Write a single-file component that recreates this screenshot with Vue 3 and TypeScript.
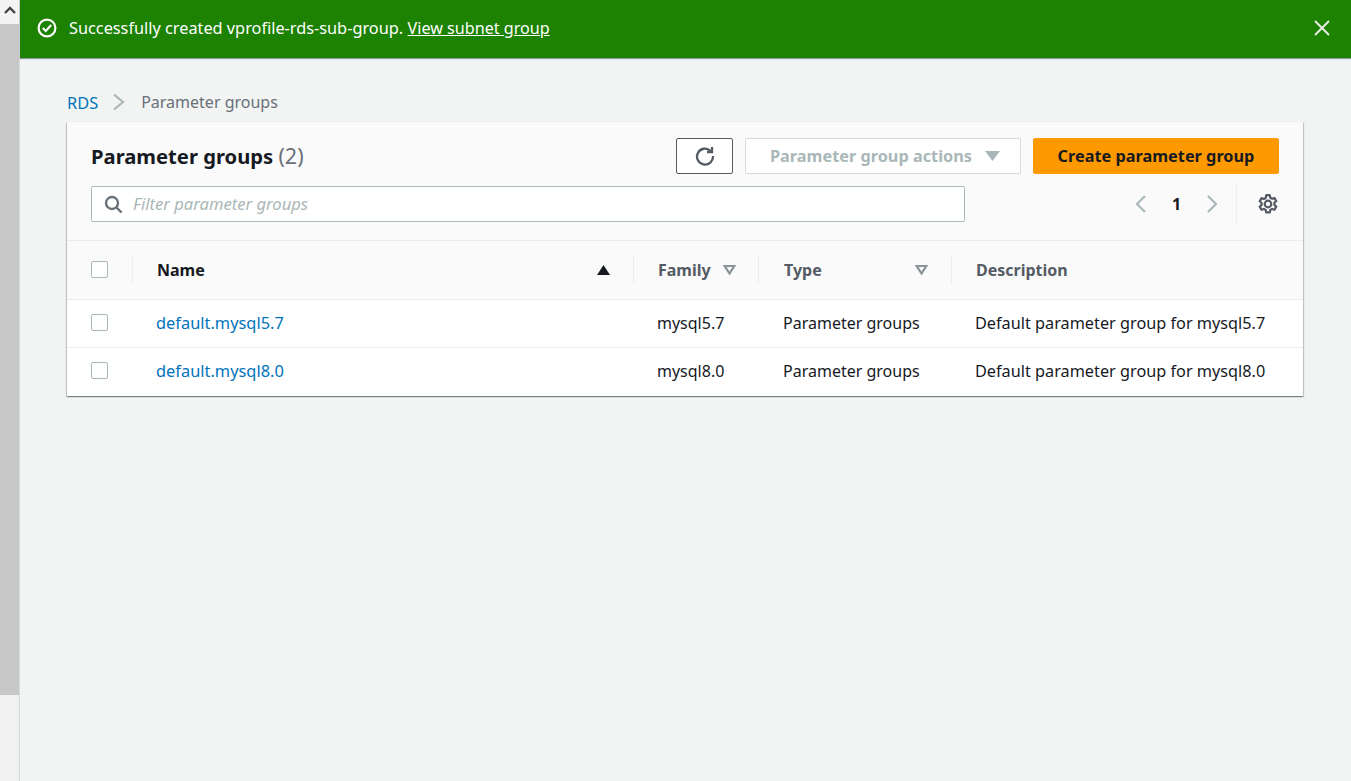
<script setup lang="ts">
interface ParamGroup {
  name: string;
  family: string;
  type: string;
  description: string;
}

const groups: ParamGroup[] = [
  { name: 'default.mysql5.7', family: 'mysql5.7', type: 'Parameter groups', description: 'Default parameter group for mysql5.7' },
  { name: 'default.mysql8.0', family: 'mysql8.0', type: 'Parameter groups', description: 'Default parameter group for mysql8.0' },
];
</script>

<template>
  <div class="page">
    <!-- fake browser scrollbar on the left -->
    <aside class="scrollbar">
      <div class="scroll-btn">
        <svg width="14" height="10" viewBox="0 0 14 10"><path d="M2 8l5-5 5 5" fill="none" stroke="#444" stroke-width="2.4" /></svg>
      </div>
      <div class="scroll-thumb"></div>
      <div class="scroll-track"></div>
    </aside>

    <div class="content">
      <div class="flash">
        <svg class="flash-icon" width="20" height="20" viewBox="0 0 20 20">
          <circle cx="10" cy="10" r="8.4" fill="none" stroke="#fff" stroke-width="2.2" />
          <path d="M5.800 10l3 3 5.400-6" fill="none" stroke="#fff" stroke-width="2.2" />
        </svg>
        <span class="flash-text">Successfully created vprofile-rds-sub-group.</span>
        <a class="flash-link">View subnet group</a>
        <svg class="flash-close" width="18" height="18" viewBox="0 0 18 18">
          <path d="M2 2l14 14M16 2L2 16" fill="none" stroke="#e6ebe3" stroke-width="2" />
        </svg>
      </div>

      <main class="main">
        <nav class="crumbs">
          <a class="crumb-link">RDS</a>
          <svg width="13" height="18" viewBox="0 0 13 18"><path d="M2 1.500l9 7.500-9 7.500" fill="none" stroke="#aab7b8" stroke-width="2.2" /></svg>
          <span class="crumb-cur">Parameter groups</span>
        </nav>

        <section class="card">
          <header class="card-head">
            <div class="head-top">
              <h1 class="title">Parameter groups <span class="count">(2)</span></h1>
              <div class="actions">
                <button class="btn btn-refresh">
                  <svg width="20" height="20" viewBox="0 0 20 20">
                    <path d="M15.500 4.800A8 8 0 1 0 18 10" fill="none" stroke="#545b64" stroke-width="2.300" />
                    <path d="M17 1v5h-5" fill="none" stroke="#545b64" stroke-width="2.300" />
                  </svg>
                </button>
                <button class="btn btn-disabled">
                  Parameter group actions
                  <svg width="15" height="10" viewBox="0 0 15 10"><path d="M0 0h15L7.500 10z" fill="#aab7b8" /></svg>
                </button>
                <button class="btn btn-primary">Create parameter group</button>
              </div>
            </div>
            <div class="head-bottom">
              <div class="filter">
                <svg width="19" height="19" viewBox="0 0 19 19">
                  <circle cx="8" cy="8" r="6" fill="none" stroke="#687078" stroke-width="2.400" />
                  <path d="M12 12l5.500 5.500" stroke="#687078" stroke-width="2.400" />
                </svg>
                <span class="filter-ph">Filter parameter groups</span>
              </div>
              <div class="pager">
                <svg width="12" height="20" viewBox="0 0 12 20"><path d="M10 2l-8 8 8 8" fill="none" stroke="#aab7b8" stroke-width="2.200" /></svg>
                <span class="page-num">1</span>
                <svg width="12" height="20" viewBox="0 0 12 20"><path d="M2 2l8 8-8 8" fill="none" stroke="#aab7b8" stroke-width="2.200" /></svg>
                <span class="pager-sep"></span>
                <svg width="22" height="22" viewBox="0 0 20 20">
                  <circle cx="10" cy="10" r="3" fill="none" stroke="#545b64" stroke-width="2" />
                  <path d="M8.400 2h3.200l.5 2.300 1.600.9 2.200-.7 1.600 2.800-1.700 1.600v1.900l1.700 1.600-1.600 2.800-2.200-.7-1.600.9-.5 2.300H8.400l-.5-2.300-1.600-.9-2.200.7-1.600-2.800 1.700-1.600V9.100L2.500 7.500l1.600-2.800 2.200.7 1.600-.9z" fill="none" stroke="#545b64" stroke-width="2" stroke-linejoin="round" />
                </svg>
              </div>
            </div>
          </header>

          <div class="row row-head">
            <div class="cell cell-check"><span class="check"></span></div>
            <div class="cell cell-name sorted">
              <span>Name</span>
              <svg width="13" height="10" viewBox="0 0 13 10"><path d="M6.500 0l6.500 10H0z" fill="#16191f" /></svg>
            </div>
            <div class="cell">
              <span>Family</span>
              <svg class="filter-caret" width="13" height="10" viewBox="0 0 13 10"><path d="M1.700 1h9.600L6.500 8.500z" fill="none" stroke="#879596" stroke-width="2.200" /></svg>
            </div>
            <div class="cell cell-type">
              <span>Type</span>
              <svg width="13" height="10" viewBox="0 0 13 10"><path d="M1.700 1h9.600L6.500 8.500z" fill="none" stroke="#879596" stroke-width="2.200" /></svg>
            </div>
            <div class="cell"><span>Description</span></div>
          </div>

          <div v-for="g in groups" :key="g.name" class="row row-body">
            <div class="cell cell-check"><span class="check"></span></div>
            <div class="cell"><a class="link">{{ g.name }}</a></div>
            <div class="cell">{{ g.family }}</div>
            <div class="cell cell-type-val">{{ g.type }}</div>
            <div class="cell cell-desc">{{ g.description }}</div>
          </div>
        </section>
      </main>
    </div>
  </div>
</template>

<style>
html, body {
  margin: 0;
  background: #f2f3f3;
}
</style>

<style scoped>
.page {
  display: flex;
  height: 781px;
  overflow: hidden;
  font-family: "Noto Sans", "Open Sans", sans-serif;
  font-size: 16px;
  color: #16191f;
}

.scrollbar {
  width: 19px;
  flex-shrink: 0;
  display: flex;
  flex-direction: column;
  background: #f1f1f1;
  border-right: 1px solid #d5dbdb;
}
.scroll-btn {
  height: 24px;
  background: #f4f4f4;
  display: flex;
  justify-content: center;
  padding-top: 5px;
  box-sizing: border-box;
}
.scroll-thumb {
  height: 671px;
  background: #c8c8c8;
}
.scroll-track {
  flex: 1;
}

.content {
  flex: 1;
  min-width: 0;
}

.flash {
  height: 58px;
  box-sizing: border-box;
  background: #1d8102;
  color: #fff;
  font-size: 16.3px;
  display: flex;
  align-items: center;
  padding: 0 20px 2px 17px;
  box-shadow: 0 1px 1px rgba(0, 28, 36, 0.4);
}
.flash-icon {
  margin-right: 12px;
}
.flash-link {
  margin-left: 4.500px;
  font-size: 16.150px;
  text-decoration: underline;
}
.flash-close {
  margin-left: auto;
}

.main {
  padding: 34px 48px 0 47px;
}

.crumbs {
  display: flex;
  align-items: center;
  gap: 14px;
  height: 20px;
  margin-bottom: 10px;
}
.crumb-link {
  color: #0073bb;
  font-size: 16.4px;
}
.crumb-cur {
  color: #687078;
  margin-left: 2px;
}

.card {
  background: #fff;
  box-shadow: 0 1px 1px 0 rgba(0, 28, 36, 0.3), 1px 1px 1px 0 rgba(0, 28, 36, 0.15), -1px 1px 1px 0 rgba(0, 28, 36, 0.15), 0 0 1px 0 rgba(0, 28, 36, 0.15);
}

.card-head {
  background: #fafafa;
  padding: 16px 24px 18px;
  border-bottom: 1px solid #eaeded;
  height: 119px;
  box-sizing: border-box;
}
.head-top {
  display: flex;
  justify-content: space-between;
  align-items: center;
  height: 36px;
}
.title {
  margin: 0;
  font-size: 20.2px;
  font-weight: 700;
  line-height: 34px;
}
.count {
  font-weight: 400;
  font-size: 21.500px;
  color: #687078;
}
.actions {
  display: flex;
  gap: 12px;
}
.btn {
  height: 36px;
  box-sizing: border-box;
  border-radius: 2px;
  font-family: inherit;
  font-size: 16.3px;
  font-weight: 700;
  display: flex;
  align-items: center;
  justify-content: center;
  padding: 0;
  background: #fff;
}
.btn-refresh {
  width: 57px;
  border: 1px solid #545b64;
}
.btn-disabled {
  width: 276px;
  gap: 13px;
  padding-left: 4px;
  border: 1px solid #d5dbdb;
  color: #aab7b8;
}
.btn-primary {
  width: 246px;
  border: 1px solid #ff9900;
  background: #ff9900;
  color: #16191f;
}

.head-bottom {
  display: flex;
  justify-content: space-between;
  margin-top: 12px;
}
.filter {
  width: 874px;
  height: 36px;
  box-sizing: border-box;
  background: #fff;
  border: 1px solid #aab7b8;
  border-radius: 2px;
  display: flex;
  align-items: center;
  gap: 10px;
  padding-left: 12px;
}
.filter-ph {
  font-style: italic;
  font-size: 16.6px;
  padding-bottom: 2px;
  color: #aab7b8;
}
.pager {
  display: flex;
  align-items: center;
  height: 36px;
  color: #16191f;
}
.page-num {
  font-weight: 700;
  width: 59px;
  text-align: center;
}
.pager-sep {
  width: 1px;
  height: 36px;
  background: #eaeded;
  margin: 0 20px 0 18px;
}

.row {
  display: grid;
  grid-template-columns: 66px 501px 125px 193px 1fr;
  align-items: center;
}
.row-head {
  height: 59px;
  background: #fafafa;
  border-bottom: 1px solid #eaeded;
  box-sizing: border-box;
  font-weight: 700;
  color: #545b64;
}
.row-head .cell {
  height: 28px;
  display: flex;
  align-items: center;
  border-right: 1px solid #eaeded;
  box-sizing: border-box;
  padding-left: 24px;
}
.row-head .cell:last-child {
  border-right: none;
}
.row-head .cell-check {
  padding-left: 24px;
  padding-bottom: 2px;
}
.row-head .sorted {
  color: #16191f;
  justify-content: space-between;
  padding-right: 23px;
}
.row-head .cell-type {
  justify-content: space-between;
  padding-left: 25px;
  padding-right: 23px;
}
.filter-caret {
  margin-left: 12px;
}
.row-body {
  height: 48px;
  box-sizing: border-box;
  padding-bottom: 2px;
  border-bottom: 1px solid #eaeded;
}
.row-body:last-child {
  border-bottom-color: transparent;
}
.row-body .cell {
  padding-left: 23px;
}
.row-body .cell-type-val {
  padding-left: 24px;
}
.row-body .cell-desc {
  font-size: 16.25px;
}
.row-body .cell-check {
  padding-left: 24px;
  display: flex;
  align-items: center;
}
.check {
  display: block;
  width: 17px;
  height: 17px;
  box-sizing: border-box;
  background: #fff;
  border: 1px solid #aab7b8;
  border-radius: 2px;
}
.link {
  color: #0073bb;
  font-size: 16.4px;
}
</style>
